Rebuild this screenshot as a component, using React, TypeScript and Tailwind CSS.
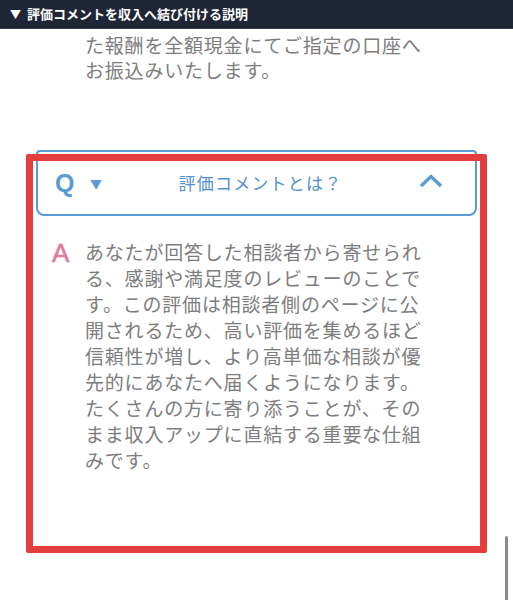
// 評価コメント説明 FAQ 画面

const answer =
  "あなたが回答した相談者から寄せられる、感謝や満足度のレビューのことです。この評価は相談者側のページに公開されるため、高い評価を集めるほど信頼性が増し、より高単価な相談が優先的にあなたへ届くようになります。たくさんの方に寄り添うことが、そのまま収入アップに直結する重要な仕組みです。";

export default function App() {
  return (
    <div className="relative h-[600px] w-full overflow-hidden bg-white font-['Noto_Sans_CJK_JP','Noto_Sans',sans-serif]">
      {/* ヘッダー */}
      <div className="flex h-[29px] items-center gap-[6px] border-b border-[#3a4150] bg-[#1f2635] px-[10px] text-[13px] font-bold text-white">
        <span className="text-[11px]">▼</span>
        <span>評価コメントを収入へ結び付ける説明</span>
      </div>

      {/* 前の回答の続き */}
      <p className="box-content w-[360px] pl-[85px] pt-[3px] text-[19px] leading-[25px] tracking-[0.8px] text-[#7d7d7d]">
        た報酬を全額現金にてご指定の口座へ
        <br />
        お振込みいたします。
      </p>

      {/* FAQ */}
      <div className="mx-[36px] mt-[68px]">
        <div className="flex h-[66px] items-center rounded-b-[8px] rounded-t-[4px] border-2 border-[#5b9bd5] pl-[17px] pr-[32px]">
          <span className="w-[21px] font-['Liberation_Sans',sans-serif] text-[25px] font-bold leading-none text-[#5b9bd5]">Q</span>
          <span className="ml-[14px] mt-[2px] text-[12px] leading-none text-[#5b9bd5]">▼</span>
          <span className="flex-1 text-center text-[17px] tracking-[1.2px] text-[#4f91d1]">評価コメントとは？</span>
          <svg width="24" height="14" viewBox="0 0 24 14" fill="none" className="mb-[4px]">
            <path d="M2 12 L12 2.5 L22 12" stroke="#5b9bd5" strokeWidth="3.4" strokeLinejoin="miter" />
          </svg>
        </div>

        <div className="mt-[23px] flex gap-[9px] pl-[16px]">
          <span className="mt-[2px] w-[24px] font-['Liberation_Sans',sans-serif] text-[26px] leading-[24px] text-[#e07a9c] [-webkit-text-stroke:0.6px_#e07a9c]">A</span>
          <p className="w-[345px] text-[19px] leading-[26px] tracking-[0.8px] text-[#7d7d7d]">{answer}</p>
        </div>
      </div>

      {/* 注目枠 */}
      <div className="pointer-events-none absolute left-[26px] top-[154px] h-[399px] w-[461px] rounded-[2px] border-[7px] border-[#e33d3d]" />

      {/* スクロールバー */}
      <div className="absolute right-[5px] top-[536px] h-[70px] w-[3px] rounded-full bg-[#8a8a8a]" />
    </div>
  );
}
